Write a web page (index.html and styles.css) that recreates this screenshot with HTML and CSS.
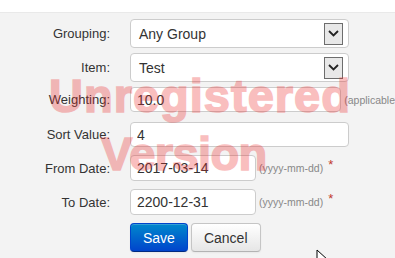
FILE: index.html
```html
<!DOCTYPE html>
<html>
<head>
  <meta charset="UTF-8">
  <link rel="stylesheet" href="styles.css">
</head>
<body>
  <div class="top-bar"></div>

  <!-- Форма элемента -->
  <div class="item-form">
    <div class="form-row row-select">
      <label class="form-label">Grouping:</label>
      <div class="form-select">
        <span class="select-value">Any Group</span>
        <span class="select-arrow">
          <svg width="11" height="7" viewBox="0 0 11 7"><path d="M1 1 L5.5 5.5 L10 1" fill="none" stroke="#222" stroke-width="1.8"/></svg>
        </span>
      </div>
    </div>
    <div class="form-row row-select">
      <label class="form-label">Item:</label>
      <div class="form-select">
        <span class="select-value">Test</span>
        <span class="select-arrow">
          <svg width="11" height="7" viewBox="0 0 11 7"><path d="M1 1 L5.5 5.5 L10 1" fill="none" stroke="#222" stroke-width="1.8"/></svg>
        </span>
      </div>
    </div>
    <div class="form-row row-weight">
      <label class="form-label">Weighting:</label>
      <input class="form-input wide" type="text" value="10.0">
      <span class="form-hint">(applicable</span>
    </div>
    <div class="form-row row-sort">
      <label class="form-label">Sort Value:</label>
      <input class="form-input wide" type="text" value="4">
    </div>
    <div class="form-row row-date">
      <label class="form-label">From Date:</label>
      <input class="form-input short" type="text" value="2017-03-14">
      <span class="form-hint">(yyyy-mm-dd)</span>
      <span class="required">*</span>
    </div>
    <div class="form-row row-date">
      <label class="form-label">To Date:</label>
      <input class="form-input short" type="text" value="2200-12-31">
      <span class="form-hint">(yyyy-mm-dd)</span>
      <span class="required">*</span>
    </div>
    <div class="form-actions">
      <button class="btn btn-primary">Save</button>
      <button class="btn">Cancel</button>
    </div>
  </div>

  <!-- Водяной знак -->
  <div class="watermark wm-line1">Unregistered</div>
  <div class="watermark wm-line2">Version</div>

  <svg class="mouse-cursor" width="14" height="20" viewBox="0 0 14 20">
    <path d="M1 1 L1 16 L5 12 L8 19 L10 18 L7 11 L12 11 Z" fill="#fff" stroke="#000" stroke-width="1"/>
  </svg>
</body>
</html>
```

FILE: styles.css
```css
body {
  margin: 0;
  width: 395px;
  height: 258px;
  overflow: hidden;
  background-color: #f3f3f3;
  font-family: "Liberation Sans", Arial, sans-serif;
  font-size: 13px;
  color: #333;
  position: relative;
}
.top-bar {
  height: 12px;
  background-color: #fff;
  border-bottom: 1px solid #e9e9e9;
}
.item-form {
  padding-top: 6px;
}
.form-row {
  display: flex;
  align-items: center;
  white-space: nowrap;
}
.row-select {
  height: 29px;
  margin-bottom: 5px;
}
.row-weight {
  height: 25px;
  margin-bottom: 10px;
}
.row-sort {
  height: 25px;
  margin-bottom: 8px;
}
.row-date {
  height: 26px;
  margin-bottom: 8px;
}
.form-label {
  width: 110px;
  margin-right: 20px;
  text-align: right;
  flex-shrink: 0;
}
.form-select {
  box-sizing: border-box;
  width: 219px;
  height: 29px;
  display: flex;
  align-items: center;
  padding: 0 5px 0 8px;
  background-color: #fff;
  border: 1px solid #ccc;
  border-radius: 4px;
  font-size: 14px;
}
.select-value {
  flex: 1;
}
.select-arrow {
  box-sizing: border-box;
  width: 19px;
  height: 22px;
  display: flex;
  align-items: center;
  justify-content: center;
  background-color: #e8e8e8;
  border: 1px solid #6d6d6d;
}
.form-input {
  box-sizing: border-box;
  height: 100%;
  padding: 0 6px;
  background-color: #fff;
  border: 1px solid #ccc;
  border-radius: 4px;
  font-family: inherit;
  font-size: 14px;
  color: #333;
}
.form-input.wide {
  width: 219px;
}
.form-input.short {
  width: 126px;
}
.form-hint {
  margin-left: 3px;
  font-size: 10.5px;
  color: #888;
}
.required {
  align-self: flex-start;
  margin-top: 2px;
  margin-left: 5px;
  font-size: 13px;
  color: #c0392b;
}
.form-actions {
  display: flex;
  gap: 3px;
  margin-left: 130px;
}
.btn {
  height: 29px;
  padding: 0 12px;
  font-family: inherit;
  font-size: 14px;
  color: #333;
  background: linear-gradient(#ffffff, #e6e6e6);
  border: 1px solid #c5c5c5;
  border-bottom-color: #b3b3b3;
  border-radius: 4px;
  box-shadow: inset 0 1px 0 rgba(255,255,255,0.2), 0 1px 2px rgba(0,0,0,0.05);
}
.btn-primary {
  color: #fff;
  background: linear-gradient(#0088cc, #0044cc);
  border-color: #0044cc #0044cc #002a80;
}
/* Водяной знак поверх формы */
.watermark {
  position: absolute;
  font-size: 47px;
  font-weight: bold;
  color: #ec2a2a;
  -webkit-text-stroke: 1.6px #ec2a2a;
  opacity: 0.3;
  pointer-events: none;
  white-space: nowrap;
  line-height: 1;
}
.wm-line1 {
  left: 49px;
  top: 72px;
  letter-spacing: 1px;
}
.wm-line2 {
  left: 101px;
  top: 130px;
  letter-spacing: -0.6px;
}
.mouse-cursor {
  position: absolute;
  left: 316px;
  top: 249px;
}
```
